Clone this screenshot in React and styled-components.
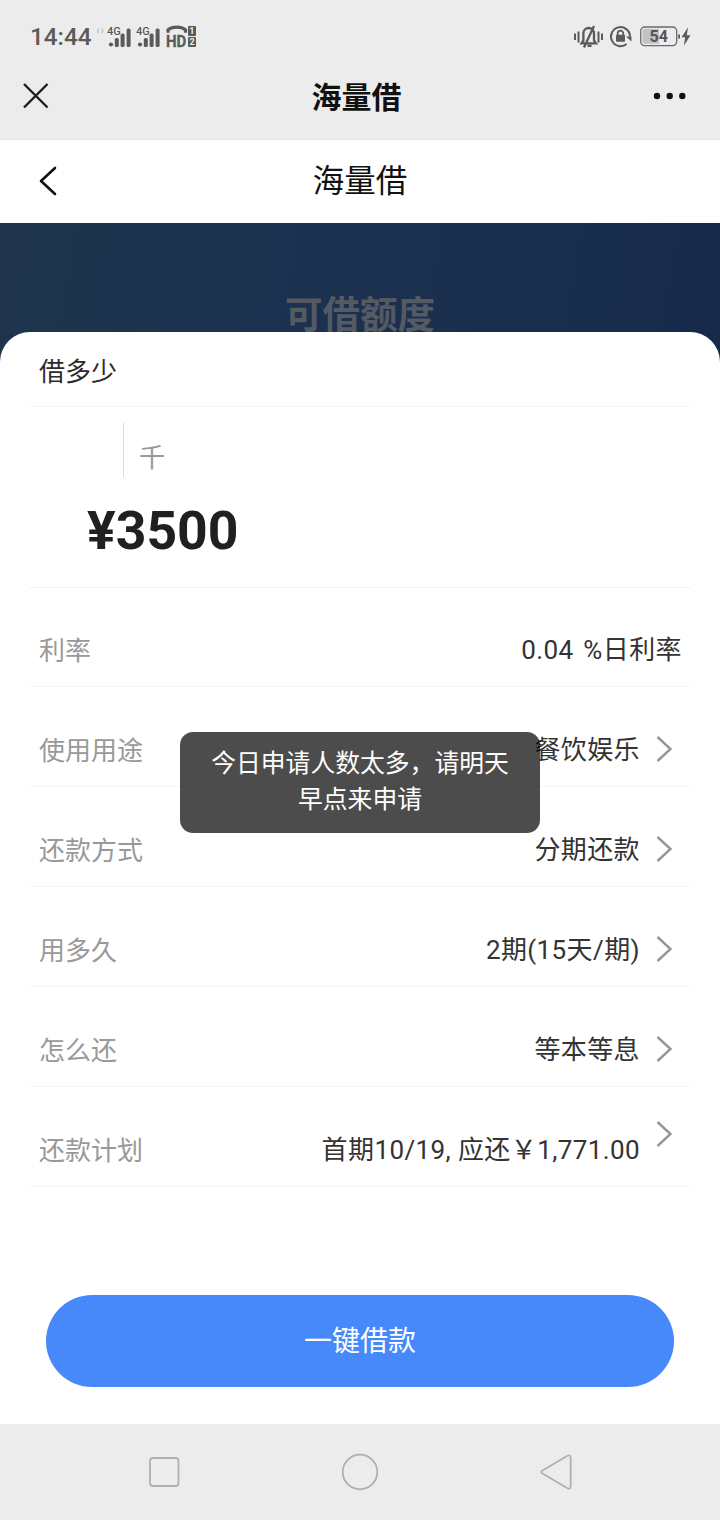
import React from "react";
import styled, { createGlobalStyle } from "styled-components";

const Global = createGlobalStyle`
  * { box-sizing: border-box; }
  body { margin: 0; background: #fff; font-family: Roboto, "Noto Sans CJK SC", sans-serif; }
`;

const Screen = styled.div`
  position: relative;
  width: 720px;
  height: 1520px;
  display: flex;
  flex-direction: column;
  overflow: hidden;
  background: #fff;
`;

const Chrome = styled.div`
  height: 140px;
  flex: none;
  background: #ececec;
  border-bottom: 1px solid #e4e4e4;
`;

const StatusBar = styled.div`
  height: 55px;
  padding: 18px 29px 0 30px;
  display: flex;
  justify-content: space-between;
  align-items: center;
  color: #5a5a5a;
`;

const StatusGroup = styled.div`
  display: flex;
  align-items: center;
`;

const Clock = styled.span`
  width: 66px;
  padding-top: 1px;
  font-size: 24.3px;
  line-height: 36px;
  font-weight: 500;
  white-space: nowrap;
`;

const TitleBar = styled.div`
  height: 84px;
  display: grid;
  grid-template-columns: 100px 1fr 107px;
  align-items: center;
`;

const AppTitle = styled.h1`
  margin: 2px 0 0;
  text-align: center;
  font-size: 30px;
  line-height: 40px;
  font-weight: 700;
  color: #111;
`;

const IconSlot = styled.div`
  display: flex;
  padding-left: ${(p) => p.$left}px;
  padding-bottom: 2px;
`;

const PageHeader = styled.header`
  height: 83px;
  flex: none;
  display: grid;
  grid-template-columns: 100px 1fr 100px;
  align-items: center;
`;

const PageTitle = styled.h2`
  margin: 0;
  text-align: center;
  font-size: 31.5px;
  line-height: 40px;
  font-weight: 400;
  color: #111;
`;

const Hero = styled.section`
  height: 150px;
  flex: none;
  padding-top: 64px;
  text-align: center;
  font-size: 37.5px;
  line-height: 56px;
  font-weight: 700;
  color: #535a62;
  background: linear-gradient(100deg, #1f354c 0%, #1c3150 45%, #182c4c 85%, #17294b 100%);
`;

const Sheet = styled.main`
  position: relative;
  flex: 1;
  margin-top: -41px;
  padding: 0 29px;
  border-radius: 30px 30px 0 0;
  background: #fff;
`;

const SheetTitle = styled.div`
  height: 75px;
  padding: 20px 10px 0;
  font-size: 26px;
  line-height: 40px;
  color: #2b2b2b;
  border-bottom: 1px solid #f4f4f4;
`;

const AmountBox = styled.div`
  height: 181px;
  padding: 16px 0 0 58px;
  border-bottom: 1px solid #f4f4f4;
`;

const Unit = styled.div`
  width: 120px;
  height: 54px;
  margin-left: 36px;
  padding: 15px 0 0 15px;
  border-left: 1px solid #dcdcdc;
  font-size: 26px;
  line-height: 40px;
  color: #999;
`;

const Amount = styled.div`
  margin-top: 22px;
  font-size: 53.5px;
  line-height: 64px;
  font-weight: 700;
  color: #202022;
`;

const Rows = styled.div`
  margin-top: -1px;
`;

const Row = styled.div`
  height: 100px;
  padding: 43px 9px 0 10px;
  display: flex;
  align-items: flex-start;
  font-size: 26px;
  line-height: 40px;
  border-bottom: 1px solid #f4f4f4;
`;

const Label = styled.span`
  flex: 1;
  padding-top: 1px;
  color: #999;
`;

const Value = styled.span`
  color: #333;
  letter-spacing: 0.4px;
  white-space: pre;
  word-spacing: ${(p) => (p.$spaced ? "3px" : "normal")};
`;

const Arrow = styled.svg`
  width: 18px;
  height: 28px;
  margin: ${(p) => (p.$raised ? "-10px" : "5px")} 9px 0 15px;
`;

const Submit = styled.button`
  display: block;
  width: 628px;
  height: 92px;
  margin: 108px 0 0 17px;
  padding: 2px 0 0;
  border: 0;
  border-radius: 46px;
  background: #4788fb;
  color: #fff;
  font: 400 28px/40px Roboto, "Noto Sans CJK SC", sans-serif;
`;

const SystemNav = styled.nav`
  height: 96px;
  flex: none;
  display: flex;
  align-items: center;
  justify-content: center;
  gap: 156px;
  background: #ececec;
`;

const Toast = styled.div`
  position: absolute;
  left: 180px;
  top: 732px;
  width: 360px;
  height: 101px;
  padding: 14px 30px;
  border-radius: 13px;
  background: rgba(0, 0, 0, 0.7);
  color: #fff;
  text-align: center;
  font-size: 24.8px;
  line-height: 36px;
`;

const ROWS = [
  { label: "利率", value: "0.04 %日利率", arrow: false, spaced: true },
  { label: "使用用途", value: "餐饮娱乐", arrow: true },
  { label: "还款方式", value: "分期还款", arrow: true },
  { label: "用多久", value: "2期(15天/期)", arrow: true },
  { label: "怎么还", value: "等本等息", arrow: true },
  { label: "还款计划", value: "首期10/19, 应还￥1,771.00", arrow: true, raised: true },
];

const Signal = ({ x }) => (
  <g transform={`translate(${x} 0)`} fill="#5a5a5a">
    <text x="0" y="16" fontSize="11" fontWeight="500">4G</text>
    <circle cx="4" cy="25.5" r="2.1" />
    <rect x="7.8" y="19" width="4" height="9" rx="1.6" />
    <rect x="13.6" y="14.5" width="4" height="13.5" rx="1.6" />
    <rect x="19.6" y="9.5" width="4" height="18.5" rx="1.6" />
  </g>
);

const NetworkIcons = () => (
  <svg width="104" height="36" viewBox="0 0 104 36" fontFamily="Roboto, sans-serif">
    <g fill="none" stroke="#c4c4c4" strokeWidth="1.4">
      <path d="M2.6 9.5q-1.5 2.3 0 4.6M6 9.5q1.5 2.3 0 4.6" />
    </g>
    <Signal x={11} />
    <Signal x={40} />
    <path d="M72 13.800v-3c4.500-3.600 13-3.600 17.500 0v3" fill="none" stroke="#5a5a5a" strokeWidth="3.200" strokeLinejoin="round" />
    <text transform="translate(70 28) scale(0.940 1)" fontSize="16" fontWeight="700" fill="#5a5a5a" stroke="#5a5a5a" strokeWidth="0.300">HD</text>
    <rect x="92" y="7" width="8" height="10" rx="1" fill="#5a5a5a" />
    <rect x="92" y="18" width="8" height="10" rx="1" fill="#5a5a5a" />
    <text x="93.300" y="15.300" fontSize="9" fontWeight="700" fill="#ececec">1</text>
    <text x="93.500" y="26.300" fontSize="9" fontWeight="700" fill="#ececec">2</text>
  </svg>
);

const DeviceIcons = () => (
  <svg width="118" height="36" viewBox="0 0 118 36" fontFamily="Roboto, sans-serif">
    <g fill="none" stroke="#5a5a5a" strokeWidth="2">
      <path d="M2 14.500v6.500M5.500 12.500v11M29 14.500v6.500M25.500 12.500v11" />
      <path d="M8.500 24.300h14.500l-2-3v-7c0-3.200-2.200-5.300-5.300-5.300s-5.300 2.100-5.300 5.300v7zM11 28.500l10-21.500M14.500 26.800h4" strokeWidth="2.300" />
      <path d="M53.600 24.900a9.500 9.500 0 1 1 3.400-7.400" strokeWidth="2" />
      <path d="M44.700 16.500v-2a2.800 2.800 0 0 1 5.600 0v2" strokeWidth="1.800" />
    </g>
    <path d="M53 17.500h5.500v5z" fill="#5a5a5a" />
    <rect x="43" y="15.800" width="9" height="7" rx="1" fill="#5a5a5a" />
    <rect x="67.700" y="8" width="36" height="18.600" rx="4" fill="#ececec" stroke="#6a6a6a" strokeWidth="1.300" />
    <path d="M72 9.800h14v15h-14a2.500 2.500 0 0 1-2.500-2.500v-10a2.500 2.500 0 0 1 2.500-2.500z" fill="#c2c2c2" />
    <text x="76.500" y="23.200" fontSize="16" fontWeight="700" fill="#555">54</text>
    <rect x="105.200" y="15.500" width="1.800" height="4" fill="#5a5a5a" />
    <path d="M115 8.300l-6.500 10h3.600l-1.200 8.500 6.600-10.500h-3.700z" fill="#5a5a5a" />
  </svg>
);

export default function App() {
  return (
    <Screen>
      <Global />
      <Chrome>
        <StatusBar>
          <StatusGroup>
            <Clock>14:44</Clock>
            <NetworkIcons />
          </StatusGroup>
          <DeviceIcons />
        </StatusBar>
        <TitleBar>
          <IconSlot $left={22}>
            <svg width="28" height="28" viewBox="0 0 28 28" fill="none" stroke="#1c1c1c" strokeWidth="2.400">
              <path d="M2 2l23.500 23.500M25.500 2L2 25.500" />
            </svg>
          </IconSlot>
          <AppTitle>海量借</AppTitle>
          <IconSlot $left={38}>
            <svg width="38" height="10" viewBox="0 0 38 10" fill="#111">
              <circle cx="6" cy="5" r="3.200" />
              <circle cx="18.700" cy="5" r="3.200" />
              <circle cx="31.300" cy="5" r="3.200" />
            </svg>
          </IconSlot>
        </TitleBar>
      </Chrome>
      <PageHeader>
        <IconSlot $left={38}>
          <svg width="20" height="32" viewBox="0 0 20 32" fill="none" stroke="#111" strokeWidth="2.600" strokeLinecap="round" strokeLinejoin="round">
            <path d="M17 3L3 16l14 13" />
          </svg>
        </IconSlot>
        <PageTitle>海量借</PageTitle>
      </PageHeader>
      <Hero>可借额度</Hero>
      <Sheet>
        <SheetTitle>借多少</SheetTitle>
        <AmountBox>
          <Unit>千</Unit>
          <Amount>¥3500</Amount>
        </AmountBox>
        <Rows>
          {ROWS.map((r) => (
            <Row key={r.label}>
              <Label>{r.label}</Label>
              <Value $spaced={r.spaced}>{r.value}</Value>
              {r.arrow && (
                <Arrow $raised={r.raised} viewBox="0 0 18 28" fill="none" stroke="#969696" strokeWidth="2.400">
                  <path d="M2.500 2L15.500 14L2.500 26" />
                </Arrow>
              )}
            </Row>
          ))}
        </Rows>
        <Submit>一键借款</Submit>
      </Sheet>
      <SystemNav>
        <svg width="40" height="40" viewBox="0 0 40 40" fill="none" stroke="#b0b0b0" strokeWidth="1.800">
          <rect x="6" y="6" width="28.500" height="28" rx="3" />
        </svg>
        <svg width="40" height="40" viewBox="0 0 40 40" fill="none" stroke="#b0b0b0" strokeWidth="1.800">
          <circle cx="20" cy="20" r="17.300" />
        </svg>
        <svg width="40" height="40" viewBox="0 0 40 40" fill="none" stroke="#b0b0b0" strokeWidth="1.800" strokeLinejoin="round">
          <path d="M6.500 18.500L31.500 3.800q3-1.500 3.200 1.700v29q-.2 3.200-3.200 1.700L6.500 21.500q-2.500-1.500 0-3z" />
        </svg>
      </SystemNav>
      <Toast>今日申请人数太多，请明天早点来申请</Toast>
    </Screen>
  );
}
